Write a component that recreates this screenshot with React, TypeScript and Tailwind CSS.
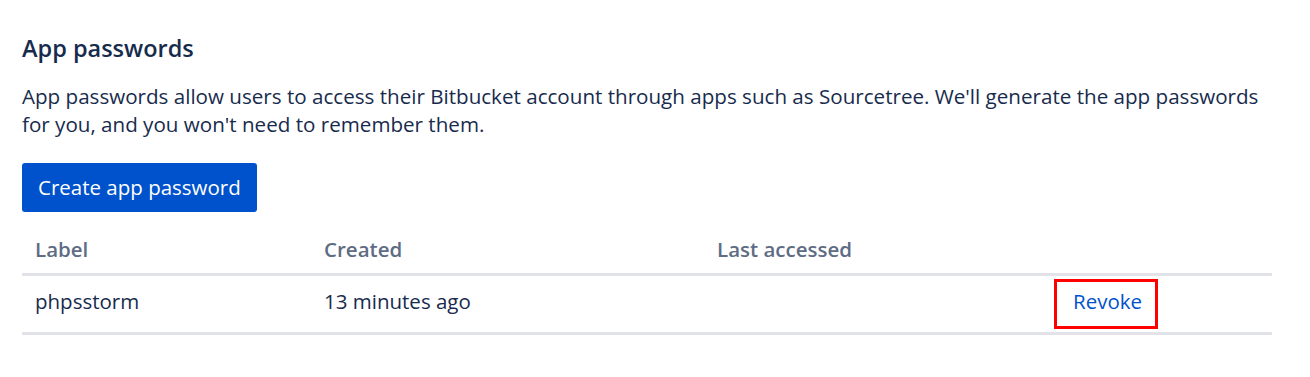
import React from "react";

export default function App() {
  return (
    <div
      className="w-[1310px] h-[377px] bg-white text-[#172b4d] overflow-hidden"
      style={{ fontFamily: '"Open Sans", "Noto Sans", sans-serif' }}
    >
      <div className="pl-[22px] pt-[32px]">
        <h2 className="text-[23.5px] leading-[32px] font-semibold text-[#172b4d]">App passwords</h2>
        <p className="mt-[18px] w-[1250px] text-[20.6px] leading-[28px] text-[#172b4d]">
          App passwords allow users to access their Bitbucket account through apps such as Sourcetree. We'll generate the
          app passwords for you, and you won't need to remember them.
        </p>
        <button className="mt-[25px] flex h-[49px] items-center px-[16px] rounded-[3px] bg-[#0052cc] text-white text-[20.5px] font-normal">
          Create app password
        </button>
        <table className="w-[1250px] table-fixed border-collapse">
          <colgroup>
            <col className="w-[289px]" />
            <col className="w-[393px]" />
            <col className="w-[337px]" />
            <col className="w-[231px]" />
          </colgroup>
          <thead>
            <tr className="border-b-[3px] border-[#e1e3e8]">
              <th className="pt-[23px] pb-[10px] pl-[13px] text-left align-top text-[20.5px] leading-[28px] font-semibold text-[#5e6c84]">
                Label
              </th>
              <th className="pt-[23px] pb-[10px] pl-[13px] text-left align-top text-[20.5px] leading-[28px] font-semibold text-[#5e6c84]">
                Created
              </th>
              <th className="pt-[23px] pb-[10px] pl-[13px] text-left align-top text-[20.5px] leading-[28px] font-semibold text-[#5e6c84]">
                Last accessed
              </th>
              <th></th>
            </tr>
          </thead>
          <tbody>
            <tr className="border-b-[3px] border-[#e1e3e8]">
              <td className="pt-[11px] pb-[17px] pl-[13px] align-top text-[20.5px] leading-[28px] text-[#172b4d]">phpsstorm</td>
              <td className="pt-[11px] pb-[17px] pl-[13px] align-top text-[20.5px] leading-[28px] text-[#172b4d]">
                13 minutes ago
              </td>
              <td></td>
              <td className="py-[3px] pl-[13px] align-top">
                <div className="h-[50px] w-[104px] border-[3px] border-[#ff0000] pt-[5px] pl-[16px] text-[20.5px] leading-[28px] text-[#0052cc]">
                  Revoke
                </div>
              </td>
            </tr>
          </tbody>
        </table>
      </div>
    </div>
  );
}
